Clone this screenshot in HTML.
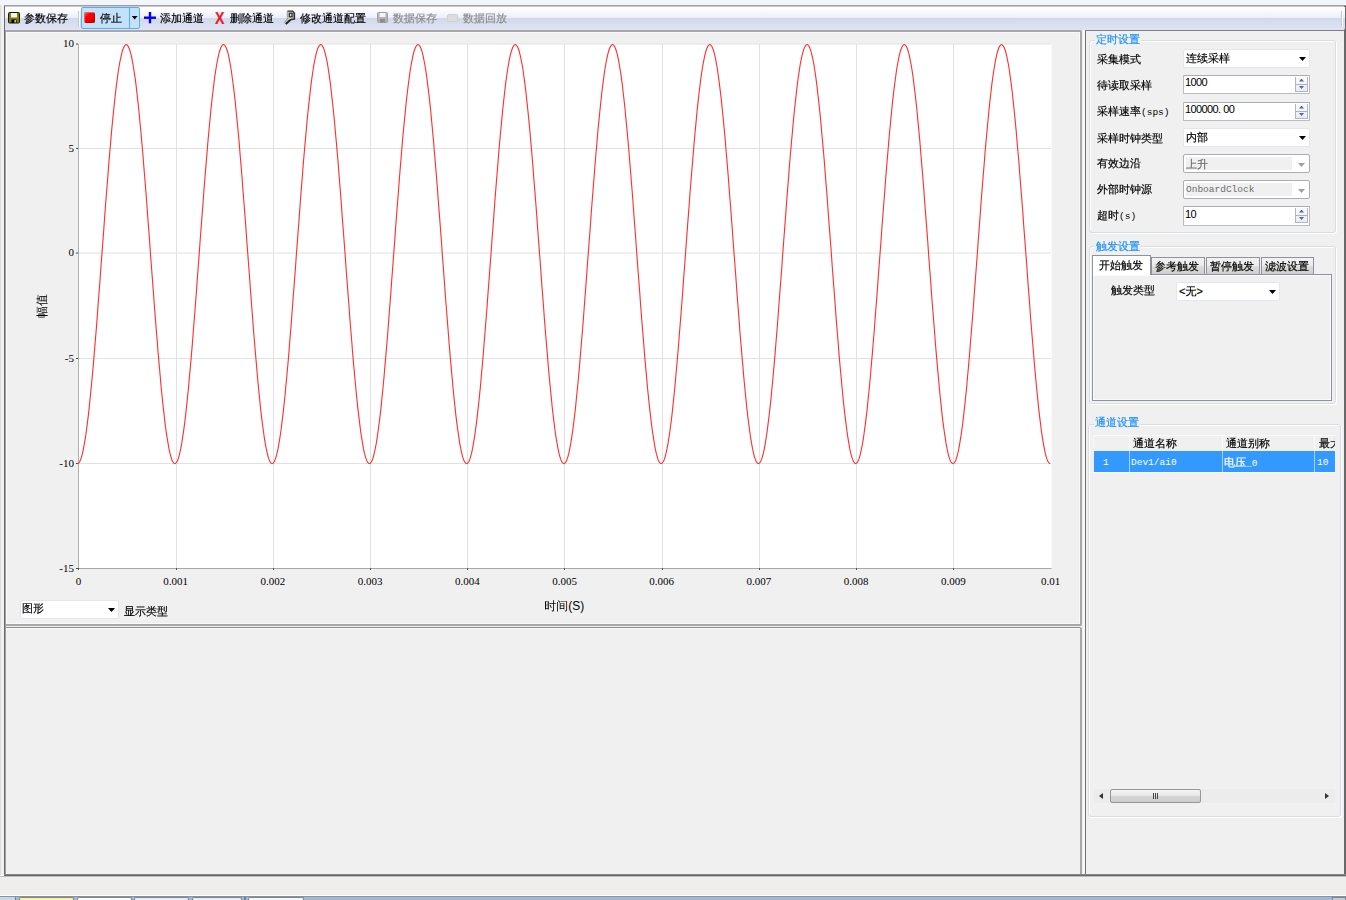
<!DOCTYPE html>
<html lang="zh-CN">
<head>
<meta charset="utf-8">
<title>数据采集</title>
<style>
*{box-sizing:border-box;margin:0;padding:0}
html,body{width:1346px;height:900px;overflow:hidden}
body{position:relative;background:#f0f0f0;-webkit-text-stroke:0.18px currentColor;font-family:"Liberation Sans","WenQuanYi Zen Hei","Noto Sans CJK SC",sans-serif;font-size:11px;color:#000;line-height:12px}
.a{position:absolute}
.t{position:absolute;white-space:nowrap;line-height:12px;height:12px}
.mono{font-family:"Liberation Mono","WenQuanYi Zen Hei",monospace;font-size:9.5px;letter-spacing:0}
.ser{font-family:"Liberation Serif",serif;font-size:11px}
.gb{position:absolute;border:1px solid #d5dfe5;border-radius:3px;box-shadow:inset 1px 1px 0 #fff, 1px 1px 0 #fff}
.gbt{position:absolute;color:#1e90ff;background:#f0f0f0;padding:0 1px;white-space:nowrap;line-height:12px;height:12px}
.cb{position:absolute;background:#fff;border:1px solid #e2e6ee;border-radius:2px}
.cb .v{position:absolute;left:2px;top:2px;white-space:nowrap;line-height:12px}
.cb .ar{position:absolute;right:3px;top:7px;width:7px;height:4px;background:#000;clip-path:polygon(0 0,100% 0,50% 100%)}
.cbd{position:absolute;background:#fff;border:1px solid #abadb3;border-radius:2px}
.cbd .in{position:absolute;left:2px;top:2px;right:17px;bottom:2px;background:#f0f0f0}
.cbd .v{position:absolute;left:2px;top:3px;white-space:nowrap;line-height:12px;color:#6d6d6d}
.cbd .ar{position:absolute;right:4px;top:8px;width:7px;height:4px;background:#a0a0a0;clip-path:polygon(0 0,100% 0,50% 100%)}
.nud{position:absolute;background:#fff;border:1px solid #b9bcc5;border-top-color:#abadb3;border-radius:1px}
.nud .v{position:absolute;left:1px;top:0.6px;white-space:nowrap;line-height:12px;letter-spacing:-0.6px;-webkit-text-stroke:0}
.nud .sp{position:absolute;right:1px;top:1px;width:13px;height:15px;border:1px solid #b2b5bd;border-top:0;background:linear-gradient(#fbfbfb,#ececec)}
.nud .sp i{position:absolute;left:0;width:11px}
.nud .sp i.m{top:7px;height:1px;background:#aeb1b9}
.nud .sp i.u,.nud .sp i.d{left:3px;width:5px;height:3px;background:#4d61c5}
.nud .sp i.u{top:1.5px;clip-path:polygon(50% 0,100% 100%,0 100%)}
.nud .sp i.d{top:9px;clip-path:polygon(0 0,100% 0,50% 100%)}
.mono{-webkit-text-stroke:0}
</style>
</head>
<body>
<!-- top strip -->
<div class="a" style="left:0;top:0;width:1346px;height:5px;background:#f2f6fb"></div>
<div class="a" style="left:4px;top:5px;width:1342px;height:1px;background:#a0a0a0"></div><div class="a" style="left:5px;top:6px;width:1339px;height:1px;background:#c8c8c8"></div>
<!-- outer frame -->
<div class="a" style="left:4px;top:6px;width:1px;height:870px;background:#696969"></div>
<div class="a" style="left:5px;top:30px;width:1px;height:845px;background:#a0a0a0"></div>
<div class="a" style="left:1344px;top:6px;width:2px;height:870px;background:#696969"></div>
<div class="a" style="left:4px;top:874px;width:1342px;height:1px;background:#858585"></div>
<div class="a" style="left:4px;top:875px;width:1342px;height:1px;background:#696969"></div>
<div class="a" style="left:0;top:5px;width:1px;height:871px;background:#dcdcdc"></div>
<div class="a" style="left:0;top:875px;width:4px;height:1px;background:#fff"></div>
<div class="a" style="left:0;top:876px;width:1346px;height:1px;background:#bdbdbd"></div>
<!-- bottom strip -->
<div class="a" style="left:0;top:877px;width:1346px;height:18px;background:#f0eeec"></div>
<div class="a" style="left:0;top:895px;width:1346px;height:1px;background:#fff"></div>
<div class="a" style="left:0;top:896px;width:1346px;height:1px;background:#8a929c"></div>
<div class="a" id="taskbar" style="left:0;top:897px;width:1346px;height:3px;background:#a3b8d3"></div>
<div class="a" style="left:0;top:897px;width:16px;height:3px;background:#c9d7e8;border-right:1px solid #6d7f95"></div>
<div class="a" style="left:19px;top:897px;width:55px;height:3px;background:#fbf4a0;border:1px solid #7d8794;border-bottom:0;border-radius:2px 2px 0 0"></div>
<div class="a" style="left:77px;top:897px;width:55px;height:3px;background:#fdfdfe;border:1px solid #7d8794;border-bottom:0;border-radius:2px 2px 0 0"></div>
<div class="a" style="left:134px;top:897px;width:55px;height:3px;background:#e6edf6;border:1px solid #7d8794;border-bottom:0;border-radius:2px 2px 0 0"></div>
<div class="a" style="left:192px;top:897px;width:50px;height:3px;background:#e6edf6;border:1px solid #7d8794;border-bottom:0;border-radius:2px 2px 0 0"></div>
<div class="a" style="left:244px;top:897px;width:2px;height:3px;background:#6d7f95"></div>
<div class="a" style="left:248px;top:897px;width:56px;height:3px;background:#f4f7fb;border:1px solid #7d8794;border-bottom:0;border-radius:2px 2px 0 0"></div>
<div class="a" style="left:1332px;top:897px;width:14px;height:3px;background:#c5ccd6;border:1px solid #7d8794;border-bottom:0"></div>
<!-- toolbar -->
<div class="a" id="toolbar" style="left:5px;top:7px;width:1340px;height:23px;border-radius:0 0 2px 0;background:linear-gradient(#ffffff 0,#fdfdff 10%,#eceef8 47.5%,#d2d8ec 50%,#dfe3f4 100%)"></div>
<!-- toolbar items -->
<svg class="a" style="left:8px;top:12px" width="12" height="12" viewBox="0 0 12 12"><rect x="0.5" y="0.5" width="11" height="10.5" rx="1" fill="#808000" stroke="#1a1a00"/><rect x="3" y="1" width="6" height="4.5" fill="#f4f4f4"/><rect x="3.5" y="7.5" width="5" height="3.5" fill="#000"/><rect x="6.5" y="8" width="1.3" height="2.5" fill="#eee"/></svg>
<div class="t" style="left:24px;top:11.5px">参数保存</div>
<div class="a" style="left:78px;top:11px;width:1px;height:16px;background:#c5c9d6"></div>
<div class="a" style="left:79px;top:11px;width:1px;height:16px;background:#fff"></div>
<div class="a" style="left:80.6px;top:7px;width:59.4px;height:22px;background:#c4e1fc;border:1px solid #5aaaf8;border-radius:2px"></div>
<div class="a" style="left:129px;top:8px;width:1px;height:20px;background:#5aaaf8"></div>
<div class="a" style="left:84px;top:12px;width:11.3px;height:11px;background:linear-gradient(135deg,#ff5a5a 0,#ff0000 30%,#f00000 70%,#b80000 100%);border:1px solid #c00000;border-top-color:#e86060;border-left-color:#e86060;border-radius:2px"></div>
<div class="t" style="left:100px;top:11.5px">停止</div>
<svg class="a" style="left:130px;top:14px" width="10" height="8" viewBox="0 0 10 8"><path d="M1.8 2 L7.6 2 L4.7 5.6 Z" fill="#000"/></svg>
<svg class="a" style="left:144px;top:12px" width="12" height="12" viewBox="0 0 12 12"><rect x="4.8" y="0" width="2.4" height="11.3" fill="#0000f0"/><rect x="0" y="4.5" width="12" height="2.4" fill="#0000f0"/></svg>
<div class="t" style="left:160px;top:11.5px">添加通道</div>
<div class="t" style="left:215px;top:9.5px;font-size:16.5px;font-weight:bold;color:#ed1c24;line-height:16px;height:16px;transform:scaleX(0.86);transform-origin:0 0">X</div>
<div class="t" style="left:230px;top:11.5px">删除通道</div>
<svg class="a" style="left:280px;top:8px" width="20" height="20" viewBox="0 0 20 20"><path d="M7 3 L12.5 3 L15 5 L15 11 L11 11.6 L7 9.6 Z" fill="#e9e9e9"/><path d="M8 9.6 L11 11.8 L6.2 16 L4.2 15.2 Z" fill="#c4c4c4"/><path d="M11 11.4 L5.8 16" stroke="#1e1e1e" stroke-width="1.9" fill="none"/><path d="M8 9.8 L4.3 14.8" stroke="#8a8a8a" stroke-width="0.8" fill="none"/><path d="M7.4 3.2 L12.5 3.2 L14.4 5" stroke="#2e2e2e" stroke-width="1.3" fill="none"/><path d="M7.3 3.5 L7.3 9.6" stroke="#8c8c8c" stroke-width="0.9" fill="none"/><path d="M14.3 4.8 L14.3 11 L11 11.4" stroke="#333" stroke-width="1.7" fill="none"/><rect x="9.3" y="5.2" width="2.8" height="3.6" fill="#d8d8d8" stroke="#2e2e2e" stroke-width="1.3"/></svg>
<div class="t" style="left:300px;top:11.5px">修改通道配置</div>
<svg class="a" style="left:377px;top:12px" width="11" height="11" viewBox="0 0 11 11"><rect x="0.5" y="0.5" width="10" height="10" rx="1" fill="#b4b4b4" stroke="#a0a0a0"/><rect x="2.5" y="1" width="6" height="4" fill="#f4f4f4"/><rect x="3" y="7" width="5" height="3.5" fill="#8c8c8c"/></svg>
<div class="t" style="left:393px;top:11.5px;color:#8d8d8d">数据保存</div>
<div class="a" style="left:447px;top:14px;width:11px;height:8px;background:#dcdcdc;border:1px solid #d0d0d0;border-radius:2px"></div>
<div class="t" style="left:463px;top:11.5px;color:#8d8d8d">数据回放</div>
<div class="a" style="left:1341px;top:11px;width:1px;height:15px;background:#c5c9d6"></div><div class="a" style="left:1342px;top:12px;width:1px;height:15px;background:#fff"></div>

<!-- upper-left panel -->
<div class="a" id="chartpanel" style="left:6px;top:30px;width:1076px;height:596px;border:2px solid #a8a8a8;border-left:0;border-radius:0 2px 2px 0;background:#f0f0f0;box-shadow:inset -1px -1px 0 #fafafa, inset 1px 1px 0 #fafafa"></div>
<!-- lower-left panel -->
<div class="a" id="lowpanel" style="left:6px;top:627px;width:1076px;height:247px;border:2px solid #a8a8a8;border-top:1px solid #8e8e8e;border-left:0;border-bottom:0;border-radius:0 2px 0 0;background:#f0f0f0;box-shadow:inset 0 1px 0 #fafafa"></div>
<!-- right panel -->
<div class="a" style="left:1085px;top:30px;width:1px;height:844px;background:#707070"></div>
<div class="a" style="left:1085px;top:30px;width:259px;height:1px;background:#808080"></div>
<div class="a" style="left:1083px;top:30px;width:2px;height:844px;background:#f8f8f8"></div>
<svg class="a" style="left:0;top:0" width="1084" height="626" viewBox="0 0 1084 626">
<rect x="79" y="44" width="972.6" height="524" fill="#fff"/>
<rect x="176" y="44" width="1" height="524" fill="#e1e1e1"/>
<rect x="273" y="44" width="1" height="524" fill="#e1e1e1"/>
<rect x="370" y="44" width="1" height="524" fill="#e1e1e1"/>
<rect x="467" y="44" width="1" height="524" fill="#e1e1e1"/>
<rect x="564" y="44" width="1" height="524" fill="#e1e1e1"/>
<rect x="662" y="44" width="1" height="524" fill="#e1e1e1"/>
<rect x="759" y="44" width="1" height="524" fill="#e1e1e1"/>
<rect x="856" y="44" width="1" height="524" fill="#e1e1e1"/>
<rect x="953" y="44" width="1" height="524" fill="#e1e1e1"/>
<rect x="79" y="148" width="972" height="1" fill="#e1e1e1"/>
<rect x="79" y="252.5" width="972" height="1" fill="#e1e1e1"/>
<rect x="79" y="358" width="972" height="1" fill="#e1e1e1"/>
<rect x="79" y="463" width="972" height="1" fill="#e1e1e1"/>
<rect x="79" y="43.5" width="972" height="1" fill="#e1e1e1"/>
<rect x="78" y="44" width="1" height="525" fill="#b0b0b0"/>
<rect x="78" y="568" width="973.6" height="1" fill="#a8a8a8"/>
<rect x="76" y="43.5" width="2" height="1" fill="#444"/>
<rect x="76" y="148" width="2" height="1" fill="#444"/>
<rect x="76" y="252.5" width="2" height="1" fill="#444"/>
<rect x="76" y="358" width="2" height="1" fill="#444"/>
<rect x="76" y="463" width="2" height="1" fill="#444"/>
<rect x="76" y="568" width="2" height="1" fill="#444"/>
<rect x="78" y="568" width="1" height="2" fill="#555"/>
<rect x="176" y="568" width="1" height="2" fill="#555"/>
<rect x="273" y="568" width="1" height="2" fill="#555"/>
<rect x="370" y="568" width="1" height="2" fill="#555"/>
<rect x="467" y="568" width="1" height="2" fill="#555"/>
<rect x="564" y="568" width="1" height="2" fill="#555"/>
<rect x="662" y="568" width="1" height="2" fill="#555"/>
<rect x="759" y="568" width="1" height="2" fill="#555"/>
<rect x="856" y="568" width="1" height="2" fill="#555"/>
<rect x="953" y="568" width="1" height="2" fill="#555"/>
<polyline fill="none" stroke="#ff3030" stroke-width="1.12" stroke-linejoin="round" points="77.6,463.6 78.6,463.2 79.5,462.0 80.5,459.9 81.5,457.1 82.5,453.4 83.4,448.9 84.4,443.7 85.4,437.7 86.4,431.0 87.3,423.6 88.3,415.6 89.3,406.9 90.2,397.5 91.2,387.7 92.2,377.3 93.2,366.4 94.1,355.1 95.1,343.3 96.1,331.2 97.1,318.9 98.0,306.2 99.0,293.4 100.0,280.4 100.9,267.3 101.9,254.1 102.9,241.0 103.9,227.9 104.8,214.9 105.8,202.0 106.8,189.4 107.8,177.0 108.7,164.9 109.7,153.2 110.7,141.9 111.6,131.0 112.6,120.6 113.6,110.7 114.6,101.4 115.5,92.7 116.5,84.6 117.5,77.2 118.4,70.5 119.4,64.5 120.4,59.3 121.4,54.9 122.3,51.2 123.3,48.3 124.3,46.3 125.3,45.0 126.2,44.6 127.2,45.0 128.2,46.3 129.1,48.3 130.1,51.2 131.1,54.9 132.1,59.3 133.0,64.5 134.0,70.5 135.0,77.2 136.0,84.6 136.9,92.7 137.9,101.4 138.9,110.7 139.8,120.6 140.8,131.0 141.8,141.9 142.8,153.2 143.7,164.9 144.7,177.0 145.7,189.4 146.7,202.0 147.6,214.9 148.6,227.9 149.6,241.0 150.5,254.1 151.5,267.3 152.5,280.4 153.5,293.4 154.4,306.2 155.4,318.9 156.4,331.2 157.4,343.3 158.3,355.1 159.3,366.4 160.3,377.3 161.2,387.7 162.2,397.5 163.2,406.9 164.2,415.6 165.1,423.6 166.1,431.0 167.1,437.7 168.1,443.7 169.0,448.9 170.0,453.4 171.0,457.1 171.9,459.9 172.9,462.0 173.9,463.2 174.9,463.6 175.8,463.2 176.8,462.0 177.8,459.9 178.8,457.1 179.7,453.4 180.7,448.9 181.7,443.7 182.6,437.7 183.6,431.0 184.6,423.6 185.6,415.6 186.5,406.9 187.5,397.5 188.5,387.7 189.4,377.3 190.4,366.4 191.4,355.1 192.4,343.3 193.3,331.2 194.3,318.9 195.3,306.2 196.3,293.4 197.2,280.4 198.2,267.3 199.2,254.1 200.1,241.0 201.1,227.9 202.1,214.9 203.1,202.0 204.0,189.4 205.0,177.0 206.0,164.9 207.0,153.2 207.9,141.9 208.9,131.0 209.9,120.6 210.8,110.7 211.8,101.4 212.8,92.7 213.8,84.6 214.7,77.2 215.7,70.5 216.7,64.5 217.7,59.3 218.6,54.9 219.6,51.2 220.6,48.3 221.5,46.3 222.5,45.0 223.5,44.6 224.5,45.0 225.4,46.3 226.4,48.3 227.4,51.2 228.4,54.9 229.3,59.3 230.3,64.5 231.3,70.5 232.2,77.2 233.2,84.6 234.2,92.7 235.2,101.4 236.1,110.7 237.1,120.6 238.1,131.0 239.1,141.9 240.0,153.2 241.0,164.9 242.0,177.0 242.9,189.4 243.9,202.0 244.9,214.9 245.9,227.9 246.8,241.0 247.8,254.1 248.8,267.3 249.8,280.4 250.7,293.4 251.7,306.2 252.7,318.9 253.6,331.2 254.6,343.3 255.6,355.1 256.6,366.4 257.5,377.3 258.5,387.7 259.5,397.5 260.4,406.9 261.4,415.6 262.4,423.6 263.4,431.0 264.3,437.7 265.3,443.7 266.3,448.9 267.3,453.4 268.2,457.1 269.2,459.9 270.2,462.0 271.1,463.2 272.1,463.6 273.1,463.2 274.1,462.0 275.0,459.9 276.0,457.1 277.0,453.4 278.0,448.9 278.9,443.7 279.9,437.7 280.9,431.0 281.8,423.6 282.8,415.6 283.8,406.9 284.8,397.5 285.7,387.7 286.7,377.3 287.7,366.4 288.7,355.1 289.6,343.3 290.6,331.2 291.6,318.9 292.5,306.2 293.5,293.4 294.5,280.4 295.5,267.3 296.4,254.1 297.4,241.0 298.4,227.9 299.4,214.9 300.3,202.0 301.3,189.4 302.3,177.0 303.2,164.9 304.2,153.2 305.2,141.9 306.2,131.0 307.1,120.6 308.1,110.7 309.1,101.4 310.1,92.7 311.0,84.6 312.0,77.2 313.0,70.5 313.9,64.5 314.9,59.3 315.9,54.9 316.9,51.2 317.8,48.3 318.8,46.3 319.8,45.0 320.8,44.6 321.7,45.0 322.7,46.3 323.7,48.3 324.6,51.2 325.6,54.9 326.6,59.3 327.6,64.5 328.5,70.5 329.5,77.2 330.5,84.6 331.4,92.7 332.4,101.4 333.4,110.7 334.4,120.6 335.3,131.0 336.3,141.9 337.3,153.2 338.3,164.9 339.2,177.0 340.2,189.4 341.2,202.0 342.1,214.9 343.1,227.9 344.1,241.0 345.1,254.1 346.0,267.3 347.0,280.4 348.0,293.4 349.0,306.2 349.9,318.9 350.9,331.2 351.9,343.3 352.8,355.1 353.8,366.4 354.8,377.3 355.8,387.7 356.7,397.5 357.7,406.9 358.7,415.6 359.7,423.6 360.6,431.0 361.6,437.7 362.6,443.7 363.5,448.9 364.5,453.4 365.5,457.1 366.5,459.9 367.4,462.0 368.4,463.2 369.4,463.6 370.4,463.2 371.3,462.0 372.3,459.9 373.3,457.1 374.2,453.4 375.2,448.9 376.2,443.7 377.2,437.7 378.1,431.0 379.1,423.6 380.1,415.6 381.1,406.9 382.0,397.5 383.0,387.7 384.0,377.3 384.9,366.4 385.9,355.1 386.9,343.3 387.9,331.2 388.8,318.9 389.8,306.2 390.8,293.4 391.7,280.4 392.7,267.3 393.7,254.1 394.7,241.0 395.6,227.9 396.6,214.9 397.6,202.0 398.6,189.4 399.5,177.0 400.5,164.9 401.5,153.2 402.4,141.9 403.4,131.0 404.4,120.6 405.4,110.7 406.3,101.4 407.3,92.7 408.3,84.6 409.3,77.2 410.2,70.5 411.2,64.5 412.2,59.3 413.1,54.9 414.1,51.2 415.1,48.3 416.1,46.3 417.0,45.0 418.0,44.6 419.0,45.0 420.0,46.3 420.9,48.3 421.9,51.2 422.9,54.9 423.8,59.3 424.8,64.5 425.8,70.5 426.8,77.2 427.7,84.6 428.7,92.7 429.7,101.4 430.7,110.7 431.6,120.6 432.6,131.0 433.6,141.9 434.5,153.2 435.5,164.9 436.5,177.0 437.5,189.4 438.4,202.0 439.4,214.9 440.4,227.9 441.4,241.0 442.3,254.1 443.3,267.3 444.3,280.4 445.2,293.4 446.2,306.2 447.2,318.9 448.2,331.2 449.1,343.3 450.1,355.1 451.1,366.4 452.1,377.3 453.0,387.7 454.0,397.5 455.0,406.9 455.9,415.6 456.9,423.6 457.9,431.0 458.9,437.7 459.8,443.7 460.8,448.9 461.8,453.4 462.7,457.1 463.7,459.9 464.7,462.0 465.7,463.2 466.6,463.6 467.6,463.2 468.6,462.0 469.6,459.9 470.5,457.1 471.5,453.4 472.5,448.9 473.4,443.7 474.4,437.7 475.4,431.0 476.4,423.6 477.3,415.6 478.3,406.9 479.3,397.5 480.3,387.7 481.2,377.3 482.2,366.4 483.2,355.1 484.1,343.3 485.1,331.2 486.1,318.9 487.1,306.2 488.0,293.4 489.0,280.4 490.0,267.3 491.0,254.1 491.9,241.0 492.9,227.9 493.9,214.9 494.8,202.0 495.8,189.4 496.8,177.0 497.8,164.9 498.7,153.2 499.7,141.9 500.7,131.0 501.7,120.6 502.6,110.7 503.6,101.4 504.6,92.7 505.5,84.6 506.5,77.2 507.5,70.5 508.5,64.5 509.4,59.3 510.4,54.9 511.4,51.2 512.4,48.3 513.3,46.3 514.3,45.0 515.3,44.6 516.2,45.0 517.2,46.3 518.2,48.3 519.2,51.2 520.1,54.9 521.1,59.3 522.1,64.5 523.1,70.5 524.0,77.2 525.0,84.6 526.0,92.7 526.9,101.4 527.9,110.7 528.9,120.6 529.9,131.0 530.8,141.9 531.8,153.2 532.8,164.9 533.7,177.0 534.7,189.4 535.7,202.0 536.7,214.9 537.6,227.9 538.6,241.0 539.6,254.1 540.6,267.3 541.5,280.4 542.5,293.4 543.5,306.2 544.4,318.9 545.4,331.2 546.4,343.3 547.4,355.1 548.3,366.4 549.3,377.3 550.3,387.7 551.3,397.5 552.2,406.9 553.2,415.6 554.2,423.6 555.1,431.0 556.1,437.7 557.1,443.7 558.1,448.9 559.0,453.4 560.0,457.1 561.0,459.9 562.0,462.0 562.9,463.2 563.9,463.6 564.9,463.2 565.8,462.0 566.8,459.9 567.8,457.1 568.8,453.4 569.7,448.9 570.7,443.7 571.7,437.7 572.7,431.0 573.6,423.6 574.6,415.6 575.6,406.9 576.5,397.5 577.5,387.7 578.5,377.3 579.5,366.4 580.4,355.1 581.4,343.3 582.4,331.2 583.4,318.9 584.3,306.2 585.3,293.4 586.3,280.4 587.2,267.3 588.2,254.1 589.2,241.0 590.2,227.9 591.1,214.9 592.1,202.0 593.1,189.4 594.1,177.0 595.0,164.9 596.0,153.2 597.0,141.9 597.9,131.0 598.9,120.6 599.9,110.7 600.9,101.4 601.8,92.7 602.8,84.6 603.8,77.2 604.7,70.5 605.7,64.5 606.7,59.3 607.7,54.9 608.6,51.2 609.6,48.3 610.6,46.3 611.6,45.0 612.5,44.6 613.5,45.0 614.5,46.3 615.4,48.3 616.4,51.2 617.4,54.9 618.4,59.3 619.3,64.5 620.3,70.5 621.3,77.2 622.3,84.6 623.2,92.7 624.2,101.4 625.2,110.7 626.1,120.6 627.1,131.0 628.1,141.9 629.1,153.2 630.0,164.9 631.0,177.0 632.0,189.4 633.0,202.0 633.9,214.9 634.9,227.9 635.9,241.0 636.8,254.1 637.8,267.3 638.8,280.4 639.8,293.4 640.7,306.2 641.7,318.9 642.7,331.2 643.7,343.3 644.6,355.1 645.6,366.4 646.6,377.3 647.5,387.7 648.5,397.5 649.5,406.9 650.5,415.6 651.4,423.6 652.4,431.0 653.4,437.7 654.4,443.7 655.3,448.9 656.3,453.4 657.3,457.1 658.2,459.9 659.2,462.0 660.2,463.2 661.2,463.6 662.1,463.2 663.1,462.0 664.1,459.9 665.1,457.1 666.0,453.4 667.0,448.9 668.0,443.7 668.9,437.7 669.9,431.0 670.9,423.6 671.9,415.6 672.8,406.9 673.8,397.5 674.8,387.7 675.7,377.3 676.7,366.4 677.7,355.1 678.7,343.3 679.6,331.2 680.6,318.9 681.6,306.2 682.6,293.4 683.5,280.4 684.5,267.3 685.5,254.1 686.4,241.0 687.4,227.9 688.4,214.9 689.4,202.0 690.3,189.4 691.3,177.0 692.3,164.9 693.3,153.2 694.2,141.9 695.2,131.0 696.2,120.6 697.1,110.7 698.1,101.4 699.1,92.7 700.1,84.6 701.0,77.2 702.0,70.5 703.0,64.5 704.0,59.3 704.9,54.9 705.9,51.2 706.9,48.3 707.8,46.3 708.8,45.0 709.8,44.6 710.8,45.0 711.7,46.3 712.7,48.3 713.7,51.2 714.7,54.9 715.6,59.3 716.6,64.5 717.6,70.5 718.5,77.2 719.5,84.6 720.5,92.7 721.5,101.4 722.4,110.7 723.4,120.6 724.4,131.0 725.4,141.9 726.3,153.2 727.3,164.9 728.3,177.0 729.2,189.4 730.2,202.0 731.2,214.9 732.2,227.9 733.1,241.0 734.1,254.1 735.1,267.3 736.1,280.4 737.0,293.4 738.0,306.2 739.0,318.9 739.9,331.2 740.9,343.3 741.9,355.1 742.9,366.4 743.8,377.3 744.8,387.7 745.8,397.5 746.7,406.9 747.7,415.6 748.7,423.6 749.7,431.0 750.6,437.7 751.6,443.7 752.6,448.9 753.6,453.4 754.5,457.1 755.5,459.9 756.5,462.0 757.4,463.2 758.4,463.6 759.4,463.2 760.4,462.0 761.3,459.9 762.3,457.1 763.3,453.4 764.3,448.9 765.2,443.7 766.2,437.7 767.2,431.0 768.1,423.6 769.1,415.6 770.1,406.9 771.1,397.5 772.0,387.7 773.0,377.3 774.0,366.4 775.0,355.1 775.9,343.3 776.9,331.2 777.9,318.9 778.8,306.2 779.8,293.4 780.8,280.4 781.8,267.3 782.7,254.1 783.7,241.0 784.7,227.9 785.7,214.9 786.6,202.0 787.6,189.4 788.6,177.0 789.5,164.9 790.5,153.2 791.5,141.9 792.5,131.0 793.4,120.6 794.4,110.7 795.4,101.4 796.4,92.7 797.3,84.6 798.3,77.2 799.3,70.5 800.2,64.5 801.2,59.3 802.2,54.9 803.2,51.2 804.1,48.3 805.1,46.3 806.1,45.0 807.1,44.6 808.0,45.0 809.0,46.3 810.0,48.3 810.9,51.2 811.9,54.9 812.9,59.3 813.9,64.5 814.8,70.5 815.8,77.2 816.8,84.6 817.7,92.7 818.7,101.4 819.7,110.7 820.7,120.6 821.6,131.0 822.6,141.9 823.6,153.2 824.6,164.9 825.5,177.0 826.5,189.4 827.5,202.0 828.4,214.9 829.4,227.9 830.4,241.0 831.4,254.1 832.3,267.3 833.3,280.4 834.3,293.4 835.3,306.2 836.2,318.9 837.2,331.2 838.2,343.3 839.1,355.1 840.1,366.4 841.1,377.3 842.1,387.7 843.0,397.5 844.0,406.9 845.0,415.6 846.0,423.6 846.9,431.0 847.9,437.7 848.9,443.7 849.8,448.9 850.8,453.4 851.8,457.1 852.8,459.9 853.7,462.0 854.7,463.2 855.7,463.6 856.7,463.2 857.6,462.0 858.6,459.9 859.6,457.1 860.5,453.4 861.5,448.9 862.5,443.7 863.5,437.7 864.4,431.0 865.4,423.6 866.4,415.6 867.4,406.9 868.3,397.5 869.3,387.7 870.3,377.3 871.2,366.4 872.2,355.1 873.2,343.3 874.2,331.2 875.1,318.9 876.1,306.2 877.1,293.4 878.0,280.4 879.0,267.3 880.0,254.1 881.0,241.0 881.9,227.9 882.9,214.9 883.9,202.0 884.9,189.4 885.8,177.0 886.8,164.9 887.8,153.2 888.7,141.9 889.7,131.0 890.7,120.6 891.7,110.7 892.6,101.4 893.6,92.7 894.6,84.6 895.6,77.2 896.5,70.5 897.5,64.5 898.5,59.3 899.4,54.9 900.4,51.2 901.4,48.3 902.4,46.3 903.3,45.0 904.3,44.6 905.3,45.0 906.3,46.3 907.2,48.3 908.2,51.2 909.2,54.9 910.1,59.3 911.1,64.5 912.1,70.5 913.1,77.2 914.0,84.6 915.0,92.7 916.0,101.4 917.0,110.7 917.9,120.6 918.9,131.0 919.9,141.9 920.8,153.2 921.8,164.9 922.8,177.0 923.8,189.4 924.7,202.0 925.7,214.9 926.7,227.9 927.7,241.0 928.6,254.1 929.6,267.3 930.6,280.4 931.5,293.4 932.5,306.2 933.5,318.9 934.5,331.2 935.4,343.3 936.4,355.1 937.4,366.4 938.4,377.3 939.3,387.7 940.3,397.5 941.3,406.9 942.2,415.6 943.2,423.6 944.2,431.0 945.2,437.7 946.1,443.7 947.1,448.9 948.1,453.4 949.0,457.1 950.0,459.9 951.0,462.0 952.0,463.2 952.9,463.6 953.9,463.2 954.9,462.0 955.9,459.9 956.8,457.1 957.8,453.4 958.8,448.9 959.7,443.7 960.7,437.7 961.7,431.0 962.7,423.6 963.6,415.6 964.6,406.9 965.6,397.5 966.6,387.7 967.5,377.3 968.5,366.4 969.5,355.1 970.4,343.3 971.4,331.2 972.4,318.9 973.4,306.2 974.3,293.4 975.3,280.4 976.3,267.3 977.3,254.1 978.2,241.0 979.2,227.9 980.2,214.9 981.1,202.0 982.1,189.4 983.1,177.0 984.1,164.9 985.0,153.2 986.0,141.9 987.0,131.0 988.0,120.6 988.9,110.7 989.9,101.4 990.9,92.7 991.8,84.6 992.8,77.2 993.8,70.5 994.8,64.5 995.7,59.3 996.7,54.9 997.7,51.2 998.7,48.3 999.6,46.3 1000.6,45.0 1001.6,44.6 1002.5,45.0 1003.5,46.3 1004.5,48.3 1005.5,51.2 1006.4,54.9 1007.4,59.3 1008.4,64.5 1009.4,70.5 1010.3,77.2 1011.3,84.6 1012.3,92.7 1013.2,101.4 1014.2,110.7 1015.2,120.6 1016.2,131.0 1017.1,141.9 1018.1,153.2 1019.1,164.9 1020.0,177.0 1021.0,189.4 1022.0,202.0 1023.0,214.9 1023.9,227.9 1024.9,241.0 1025.9,254.1 1026.9,267.3 1027.8,280.4 1028.8,293.4 1029.8,306.2 1030.7,318.9 1031.7,331.2 1032.7,343.3 1033.7,355.1 1034.6,366.4 1035.6,377.3 1036.6,387.7 1037.6,397.5 1038.5,406.9 1039.5,415.6 1040.5,423.6 1041.4,431.0 1042.4,437.7 1043.4,443.7 1044.4,448.9 1045.3,453.4 1046.3,457.1 1047.3,459.9 1048.3,462.0 1049.2,463.2 1050.2,463.6"/>
<text x="74" y="47.2" text-anchor="end" font-family="Liberation Serif,serif" font-size="11" fill="#000" style="-webkit-text-stroke:0">10</text>
<text x="74" y="151.7" text-anchor="end" font-family="Liberation Serif,serif" font-size="11" fill="#000" style="-webkit-text-stroke:0">5</text>
<text x="74" y="256.2" text-anchor="end" font-family="Liberation Serif,serif" font-size="11" fill="#000" style="-webkit-text-stroke:0">0</text>
<text x="74" y="361.7" text-anchor="end" font-family="Liberation Serif,serif" font-size="11" fill="#000" style="-webkit-text-stroke:0">-5</text>
<text x="74" y="466.7" text-anchor="end" font-family="Liberation Serif,serif" font-size="11" fill="#000" style="-webkit-text-stroke:0">-10</text>
<text x="74" y="571.7" text-anchor="end" font-family="Liberation Serif,serif" font-size="11" fill="#000" style="-webkit-text-stroke:0">-15</text>
<text x="78.5" y="584.8" text-anchor="middle" font-family="Liberation Serif,serif" font-size="11" fill="#000" style="-webkit-text-stroke:0">0</text>
<text x="175.7" y="584.8" text-anchor="middle" font-family="Liberation Serif,serif" font-size="11" fill="#000" style="-webkit-text-stroke:0">0.001</text>
<text x="272.9" y="584.8" text-anchor="middle" font-family="Liberation Serif,serif" font-size="11" fill="#000" style="-webkit-text-stroke:0">0.002</text>
<text x="370.1" y="584.8" text-anchor="middle" font-family="Liberation Serif,serif" font-size="11" fill="#000" style="-webkit-text-stroke:0">0.003</text>
<text x="467.3" y="584.8" text-anchor="middle" font-family="Liberation Serif,serif" font-size="11" fill="#000" style="-webkit-text-stroke:0">0.004</text>
<text x="564.5" y="584.8" text-anchor="middle" font-family="Liberation Serif,serif" font-size="11" fill="#000" style="-webkit-text-stroke:0">0.005</text>
<text x="661.7" y="584.8" text-anchor="middle" font-family="Liberation Serif,serif" font-size="11" fill="#000" style="-webkit-text-stroke:0">0.006</text>
<text x="758.9" y="584.8" text-anchor="middle" font-family="Liberation Serif,serif" font-size="11" fill="#000" style="-webkit-text-stroke:0">0.007</text>
<text x="856.1" y="584.8" text-anchor="middle" font-family="Liberation Serif,serif" font-size="11" fill="#000" style="-webkit-text-stroke:0">0.008</text>
<text x="953.3" y="584.8" text-anchor="middle" font-family="Liberation Serif,serif" font-size="11" fill="#000" style="-webkit-text-stroke:0">0.009</text>
<text x="1050.5" y="584.8" text-anchor="middle" font-family="Liberation Serif,serif" font-size="11" fill="#000" style="-webkit-text-stroke:0">0.01</text>
<text x="564.3" y="609.6" text-anchor="middle" font-family="Liberation Sans,WenQuanYi Zen Hei,Noto Sans CJK SC,sans-serif" font-size="12" fill="#000">时间(S)</text>
<text transform="translate(46.3,306) rotate(-90)" text-anchor="middle" font-family="Liberation Sans,WenQuanYi Zen Hei,Noto Sans CJK SC,sans-serif" font-size="12" fill="#000">幅值</text>
</svg>
<div class="cb" style="left:20px;top:600px;width:99px;height:19px"><span class="v" style="top:1px;left:1px">图形</span><span class="ar" style="top:7px"></span></div>
<div class="t" style="left:124px;top:605px">显示类型</div>
<!-- group 1 -->
<div class="gb" style="left:1089px;top:40px;width:247px;height:193px"></div>
<div class="gbt" style="left:1095px;top:33px">定时设置</div>
<div class="t" style="left:1097px;top:53px">采集模式</div>
<div class="t" style="left:1097px;top:79px">待读取采样</div>
<div class="t" style="left:1097px;top:105px">采样速率<span class="mono">(sps)</span></div>
<div class="t" style="left:1097px;top:132px">采样时钟类型</div>
<div class="t" style="left:1097px;top:157px">有效边沿</div>
<div class="t" style="left:1097px;top:183px">外部时钟源</div>
<div class="t" style="left:1097px;top:209px">超时<span class="mono">(s)</span></div>
<div class="cb" style="left:1183px;top:49px;width:127px;height:19px"><span class="v">连续采样</span><span class="ar"></span></div>
<div class="nud" style="left:1183px;top:75px;width:127px;height:19px"><span class="v" style="top:-0.2px">1000</span><span class="sp"><i class="u"></i><i class="m"></i><i class="d"></i></span></div>
<div class="nud" style="left:1183px;top:102px;width:127px;height:19px"><span class="v" style="top:-0.2px">100000<span style="margin-right:2.6px">.</span>00</span><span class="sp"><i class="u"></i><i class="m"></i><i class="d"></i></span></div>
<div class="cb" style="left:1183px;top:128px;width:127px;height:19px"><span class="v">内部</span><span class="ar"></span></div>
<div class="cbd" style="left:1183px;top:154px;width:127px;height:19px"><span class="in"></span><span class="v">上升</span><span class="ar"></span></div>
<div class="cbd" style="left:1183px;top:180px;width:127px;height:19px"><span class="in"></span><span class="v mono">OnboardClock</span><span class="ar"></span></div>
<div class="nud" style="left:1183px;top:206px;width:127px;height:20px"><span class="v">10</span><span class="sp"><i class="u"></i><i class="m"></i><i class="d"></i></span></div>
<!-- group 2 -->
<div class="gb" style="left:1089px;top:246px;width:247px;height:158px"></div>
<div class="gbt" style="left:1095px;top:240px">触发设置</div>
<div class="a" style="left:1092px;top:274px;width:240px;height:127px;border:1px solid #8f929a;background:#f0f0f0;box-shadow:inset 1px 1px 0 #fafafa,inset -1px -1px 0 #fafafa"></div>
<div class="a" style="left:1151px;top:257px;width:54px;height:17px;border:1px solid #8f929a;border-bottom:0;background:linear-gradient(#f2f2f2,#ebebeb 50%,#dddddd 51%,#cfcfcf)"></div>
<div class="a" style="left:1206px;top:257px;width:54px;height:17px;border:1px solid #8f929a;border-bottom:0;background:linear-gradient(#f2f2f2,#ebebeb 50%,#dddddd 51%,#cfcfcf)"></div>
<div class="a" style="left:1261px;top:257px;width:53px;height:17px;border:1px solid #8f929a;border-bottom:0;background:linear-gradient(#f2f2f2,#ebebeb 50%,#dddddd 51%,#cfcfcf)"></div>
<div class="a" style="left:1092px;top:255px;width:59px;height:20px;border:1px solid #8f929a;border-bottom:0;background:#fff"></div>
<div class="t" style="left:1099px;top:259px">开始触发</div>
<div class="t" style="left:1155px;top:260px">参考触发</div>
<div class="t" style="left:1210px;top:260px">暂停触发</div>
<div class="t" style="left:1265px;top:260px">滤波设置</div>
<div class="t" style="left:1111px;top:284px">触发类型</div>
<div class="cb" style="left:1176px;top:282px;width:104px;height:19px"><span class="v">&lt;无&gt;</span><span class="ar"></span></div>
<!-- group 3 -->
<div class="gb" style="left:1088px;top:424px;width:253px;height:393px"></div>
<div class="gbt" style="left:1094px;top:416px">通道设置</div>
<div class="a" style="left:1093px;top:435px;width:242px;height:16px;background:#f0f0f0;border-top:1px solid #fbfbfb;border-left:1px solid #f8f8f8"></div>
<div class="a" style="left:1094px;top:451px;width:241px;height:21px;background:#3399ff"></div><div class="a" style="left:1093px;top:472px;width:242px;height:1px;background:#fafafa"></div>
<div class="a" style="left:1129px;top:436px;width:1px;height:15px;background:#fafafa"></div><div class="a" style="left:1129px;top:451px;width:1px;height:21px;background:#a6d2ff"></div>
<div class="a" style="left:1222px;top:436px;width:1px;height:15px;background:#fafafa"></div><div class="a" style="left:1222px;top:451px;width:1px;height:21px;background:#a6d2ff"></div>
<div class="a" style="left:1314px;top:436px;width:1px;height:15px;background:#fafafa"></div><div class="a" style="left:1314px;top:451px;width:1px;height:21px;background:#a6d2ff"></div>
<div class="t" style="left:1133px;top:437px">通道名称</div>
<div class="t" style="left:1226px;top:437px">通道别称</div>
<div class="t" style="left:1319px;top:437px;width:16px;overflow:hidden">最大</div>
<div class="t mono" style="left:1103px;top:457px;color:#fff">1</div>
<div class="t mono" style="left:1131px;top:457px;color:#fff">Dev1/ai0</div>
<div class="t" style="left:1224px;top:456px;color:#fff">电压<span class="mono">_0</span></div>
<div class="t mono" style="left:1317px;top:457px;color:#fff">10</div>
<!-- scrollbar -->
<div class="a" style="left:1094px;top:789px;width:241px;height:14px;background:#ececec"></div>
<div class="a" style="left:1110px;top:789px;width:91px;height:14px;border:1px solid #979797;border-radius:2px;background:linear-gradient(#f4f4f4,#e6e6e6 48%,#d4d4d4 52%,#cdcdcd)"></div>
<div class="a" style="left:1153px;top:793px;width:1px;height:6px;background:#444;box-shadow:2px 0 0 #444,4px 0 0 #444"></div>
<div class="a" style="left:1099px;top:792.5px;width:0;height:0;border-top:3.5px solid transparent;border-bottom:3.5px solid transparent;border-right:4px solid #333"></div>
<div class="a" style="left:1325px;top:792.5px;width:0;height:0;border-top:3.5px solid transparent;border-bottom:3.5px solid transparent;border-left:4px solid #333"></div>

</body>
</html>
